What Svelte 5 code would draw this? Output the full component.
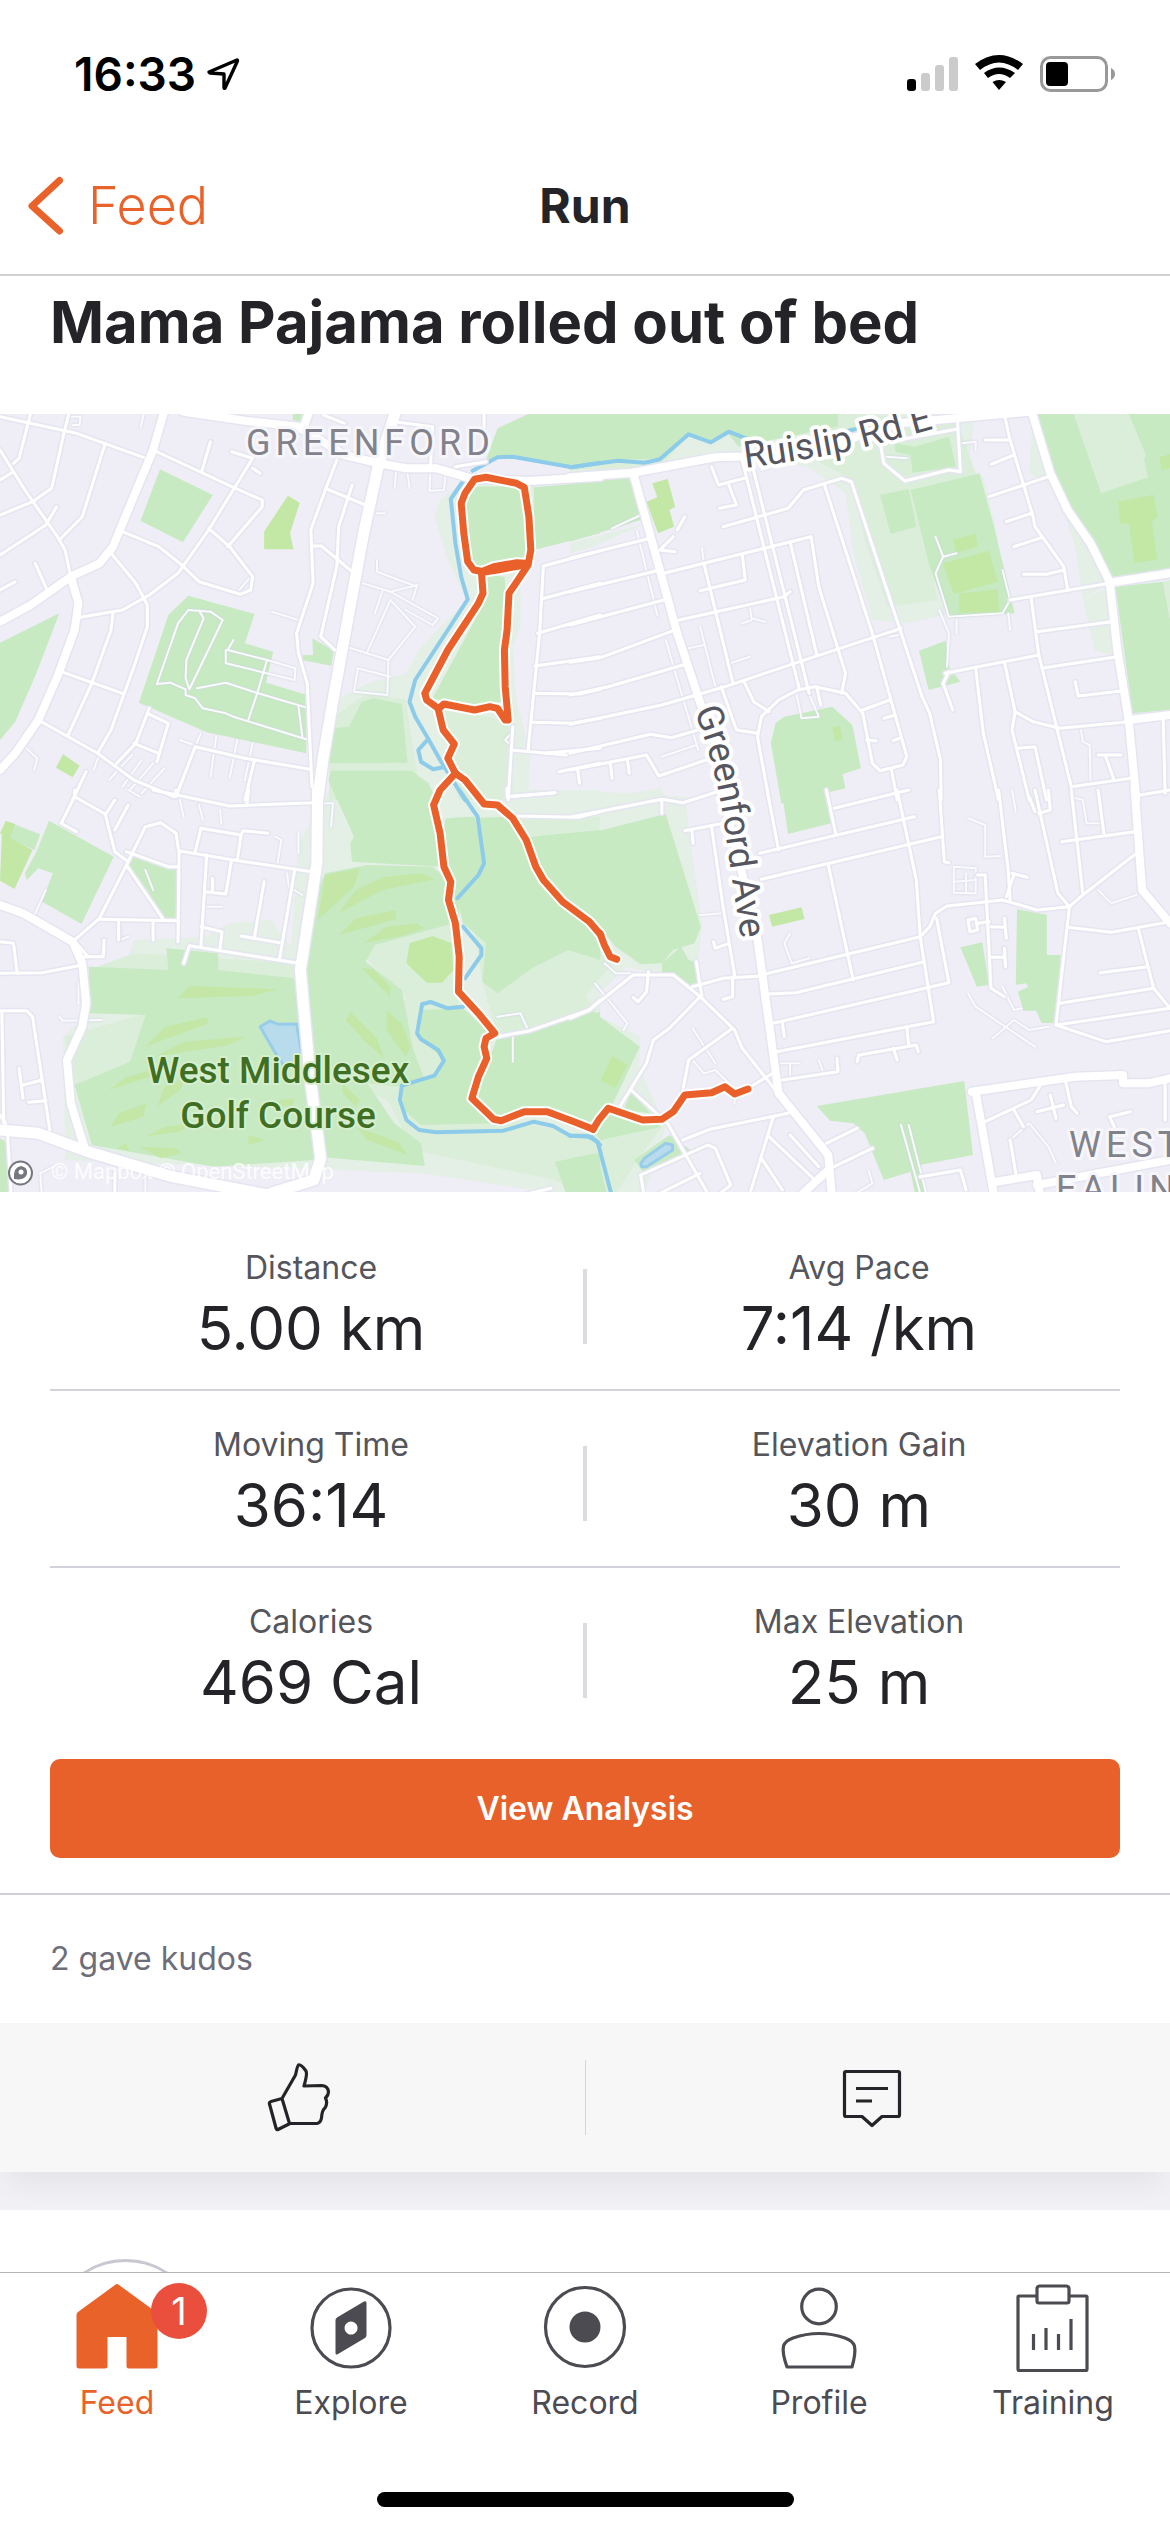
<script>
  const stats = [
    [
      { label: 'Distance', value: '5.00 km' },
      { label: 'Avg Pace', value: '7:14 /km' },
    ],
    [
      { label: 'Moving Time', value: '36:14' },
      { label: 'Elevation Gain', value: '30 m' },
    ],
    [
      { label: 'Calories', value: '469 Cal' },
      { label: 'Max Elevation', value: '25 m' },
    ],
  ];

  const tabs = ['Feed', 'Explore', 'Record', 'Profile', 'Training'];

  // Map geometry is stored per tile; each tile has its own origin and units.
  const tiles = {
    a: { x: 0, y: 400, sx: 2.613, sy: 3 },
    b: { x: 570, y: 400, sx: 2.613, sy: 3 },
    c: { x: 0, y: 790, sx: 2.613, sy: 3 },
    d: { x: 570, y: 790, sx: 2.613, sy: 3 },
  };

  function project(tile, line) {
    const t = tiles[tile];
    return line
      .split(' ')
      .map((p) => {
        const [x, y] = p.split(',').map(Number);
        return `${(t.x + x / t.sx).toFixed(1)},${(t.y + y / t.sy).toFixed(1)}`;
      })
      .join(' ');
  }

  const layer = (groups) =>
    Object.entries(groups).flatMap(([tile, lines]) => lines.map((l) => project(tile, l)));

  const haze = layer({
    a: [
      '1150,300 1230,230 1400,240 1400,480 1360,560 1360,680 1340,740 1350,900 1385,1060 1380,1200 860,1200 880,900 960,850 1060,820 1100,740 1220,600 1170,480 1135,350',
    ],
    b: ['0,120 300,80 700,40 860,40 1060,40 1040,200 1080,230 1120,420 1000,640 880,670 790,660 740,460 720,280 620,200 400,170 170,215 0,225', '0,430 200,370 60,440 0,460', '1210,40 1420,540 1340,600 1320,440 1270,260 1200,220', '1340,600 1410,560 1425,770 1370,750', '60,1200 240,1163 250,1200'],
    c: [
      '860,0 1568,0 1568,1230 1100,1150 170,1110 165,740 230,670 300,660 330,520 350,450 540,440 600,400 710,390 760,470 780,160',
    ],
    d: ['0,0 300,20 315,160 345,400 330,580 250,560 150,530 0,690 60,670 185,740 180,830 250,1010 190,1230 0,1230'],
  });

  const soft = layer({
    a: ['1150,930 1330,960 1340,1200 1200,1200 1170,1050', '860,960 960,880 1060,900 1100,1200 860,1200'],
    b: ['0,170 300,110 240,200 0,210', '700,40 1010,60 1060,220 900,270 960,600 830,620 770,420 740,240 640,180'],
    c: ['1190,80 1568,80 1520,600 1568,680 1300,740 1260,570', '940,420 1190,400 1200,700 1090,980 960,900 1060,620 960,510', '1000,900 1568,1050 1568,1230 1450,1170 1080,1080', '350,490 780,520 780,570 230,540', '170,740 380,670 330,860 190,890'],
    d: ['0,500 70,470 110,520 60,590 0,660', '0,1030 240,1010 170,1120 110,1230 0,1230'],
  });

  const parks = layer({
    a: [
      '418,208 556,285 478,427 367,362',
      '155,640 95,820 40,965 0,1020 0,728',
      '492,587 665,642 640,730 714,755 695,848 803,885 800,1060 540,997 363,908 440,645',
      '816,715 872,752 866,797 788,780 790,766 818,765',
      '1300,85 1385,40 1568,40 1568,190 1490,205 1340,165 1270,180',
      '1235,260 1360,258 1380,480 1255,505 1225,490 1212,340',
      '1395,262 1568,245 1568,400 1395,450',
      '1265,525 1318,530 1322,600 1310,905 1240,920 1130,895 1260,620',
      '975,895 1050,912 1065,1088 858,1090 870,985 912,980 945,905',
      '865,1112 1075,1112 1120,1150 1140,1200 880,1200 858,1140',
      '765,40 790,40 785,65 765,60',
    ],
    b: [
      '0,40 700,40 700,80 440,140 410,95 360,125 310,100 235,175 125,180 0,200',
      '0,245 158,235 185,360 0,425',
      '890,270 1070,220 1108,380 1162,640 990,655 940,500',
      '810,285 885,267 905,380 838,402',
      '850,130 900,140 990,110 1008,200 895,218 890,165 850,155',
      '1215,40 1568,40 1568,510 1410,540 1300,330',
      '1425,560 1550,545 1568,660 1568,930 1470,940',
      '912,752 982,722 990,800 1020,845 937,870',
      '560,950 685,920 738,975 760,1105 712,1123 720,1165 665,1180 670,1210 552,1210 525,1030 537,970',
    ],
    c: [
      '870,0 1120,-20 1150,230 920,215 915,160 925,140',
      '128,92 297,200 213,402 110,335 138,250 100,235 70,270 65,250 95,185',
      '35,102 105,133 90,180 25,145',
      '340,195 465,240 465,385 425,388 330,225',
      '232,530 440,540 435,475 570,490 570,540 770,565 800,780 820,1110 560,1130 240,1065 195,885 340,815 380,675 232,670',
      '850,250 960,225 1130,230 1170,270 1185,400 980,465 955,515 1050,600 1080,780 1110,870 1045,890 960,880 1030,1000 1100,1060 1110,1128 830,1100 780,540 830,300',
      '1165,85 1240,80 1265,220 1200,320 1200,400 1170,270 1150,160',
      '1325,80 1390,140 1568,120 1568,510 1485,480 1390,535 1300,610 1260,575 1270,460 1210,400 1195,330 1265,220 1250,85',
      '1105,660 1210,655 1280,730 1265,780 1235,930 1300,1000 1100,1005 1055,960 1050,890 1130,860 1160,810 1095,740',
      '1300,740 1400,720 1568,665 1568,1000 1420,950 1300,985 1240,930',
      '1450,1115 1568,1090 1568,1230 1485,1230',
      '0,1045 20,1060 30,1230 0,1230',
    ],
    d: [
      '0,145 250,72 342,412 325,460 270,480 240,520 185,523 120,470 90,430 0,350',
      '240,520 290,470 310,510 325,515 333,580 315,585 240,548',
      '0,685 60,665 182,770 110,945 60,1000 0,990',
      '160,905 210,970 140,960',
      '80,1050 60,1020 110,960 240,1010',
      '0,1105 70,1090 100,1230 0,1230',
      '260,1035 315,1080 190,1145 168,1110',
      '550,-20 665,-20 682,100 570,132',
      '1020,472 1077,457 1095,585 1063,590',
      '1168,358 1246,374 1246,495 1282,495 1270,700 1232,698 1218,662 1185,662 1170,605 1198,590 1190,580 1165,585',
      '645,948 1030,873 1053,1095 915,1125 930,1230 905,1230 890,1145 820,1170 770,1030 740,1000 680,992',
    ],
  });

  const meadow = layer({
    b: ['1315,40 1460,40 1505,165 1500,178 1510,232 1388,280', '1550,545 1568,540 1568,655'],
  });

  const lime = layer({
    a: ['752,287 783,308 758,400 767,448 690,448 690,395', '165,1063 208,1097 190,1132 146,1103'],
    b: ['215,250 255,237 275,320 260,330 272,380 230,400 200,305 228,292', '1000,420 1060,400 1065,440 1010,458', '975,490 1095,452 1118,545 1003,582', '1017,580 1117,568 1122,638 1017,638', '1432,305 1525,284 1535,350 1520,365 1535,478 1475,490 1460,372 1437,370', '685,982 705,977 712,1020 693,1024', '1540,172 1568,162 1568,205 1545,210'],
    c: ['5,130 85,180 38,297 0,272', '15,92 40,102 25,145 0,130', '1070,460 1130,438 1180,460 1185,540 1155,578 1115,578 1062,520'],
    d: ['520,375 605,352 613,387 528,410', '110,797 150,825 118,895 80,870 95,835'],
  });

  const fairways = layer({
    c: [
      '850,255 940,235 925,290 830,390',
      '885,370 930,300 1000,262 1100,250 1135,268 1000,300',
      '885,435 930,385 1035,360 1035,388',
      '950,460 1010,410 1090,400 1108,415 1060,435',
      '465,625 495,587 725,598 660,618',
      '380,770 430,710 540,682 545,700',
      '405,800 480,755 640,740 600,765',
      '285,900 330,860 430,830 420,850',
      '410,950 430,890 490,860 470,900',
      '290,1010 310,970 382,940 375,980',
      '945,535 975,538 1020,590 1020,620',
      '915,665 985,745 1003,805 950,750 903,690',
      '1010,662 1050,700 1073,770 1060,800 1010,720',
      '895,880 940,930 930,950 895,910',
      '930,1010 1040,1055 1065,1095 960,1050',
      '365,1070 460,1075 475,1090 420,1105',
      '650,1035 693,1050 648,1065',
      '305,1075 330,1060 338,1083',
      '700,935 770,925 765,945 710,955',
      '380,1040 430,1010 500,1000 470,1025',
    ],
  });

  const ponds = layer({
    c: ['680,710 705,693 728,703 775,702 790,800 770,830 740,825 715,780'],
    d: ['185,1120 195,1105 250,1060 268,1065 268,1080 200,1130 187,1130'],
  });

  const rivers = layer({
    a: ['1568,188 1495,202 1340,170 1300,172 1235,212', '1212,240 1178,297 1190,430 1205,530 1222,598 1170,690 1085,840 1070,905 1085,950 1118,1015 1150,1080 1215,1200', '1118,1018 1093,1050 1100,1085 1132,1108 1165,1100'],
    b: ['0,202 125,182 195,188 235,178 310,103 368,127 415,95 460,115', '715,95 745,88'],
    c: ['1200,0 1248,80 1265,220 1250,255 1195,325', '1210,410 1258,475 1258,495 1215,565', '1210,650 1170,655 1125,636 1103,643 1090,730 1100,748 1145,780 1160,812 1135,857 1050,887 1045,930 1062,990 1095,1020 1140,1027 1315,1022 1395,995 1445,1008 1490,1037 1545,1040 1568,1065'],
    d: ['0,1037 45,1038 72,1055 112,1230'],
  });

  const paths = layer({
    a: [
      '410,852 465,670 492,630 550,635 582,660 495,868 485,835 487,780 532,655 520,632',
      '410,852 445,848 485,868 485,885 510,895 530,925 590,940 610,950 800,1018',
      '515,865 590,848 670,878 798,922', '648,962 672,880 698,780', '610,720 595,750 698,780 772,805 770,840 590,790 590,750',
      '948,550 1020,575 1090,555 1078,600', '985,480 985,515 1090,560', '1020,600 960,755', '1020,575 1145,655 1130,675 1060,630',
      '1020,600 1085,680 1015,780 905,740', '1015,780 1012,885 925,875 935,805 1020,830', '1000,570 980,640',
      '60,1035 97,1075 90,1110', '260,1060 245,1110', '345,1065 285,1140', '370,1080 320,1160', '400,1090 340,1170', '430,1105 370,1180',
      '525,1000 510,1040', '565,1010 550,1130', '620,1020 600,1135', '660,1030 640,1140', '470,1020 520,1040', '1035,210 1032,260', '1065,220 1070,265', '1125,210 1122,272 1160,270 1165,220',
      '180,50 210,50 208,75 190,75', '375,45 368,80', '985,340 1005,340', '655,530 625,570', '710,635 780,660', '1335,1000 1320,1020 1335,1035', '780,920 790,1010',
    ],
    b: [
      '175,395 228,645', '345,445 350,490', '340,680 380,860', '250,720 335,1050', '310,745 350,735', '420,790 470,770', '470,620 475,660 450,670', '475,655 510,665',
      '955,410 975,470 955,520 990,650 1130,640 1150,600 1130,510', '975,470 1010,460', '965,630 990,700 985,800', '1010,660 1010,700', '1025,130 1060,125 1060,150', '1335,990 1340,1025 1358,1035 1360,1145',
      '240,1070 330,1035', '590,870 605,955 650,950 620,870', '835,710 860,705', '825,170 880,175', '110,385 185,345', '500,210 570,180', '1145,640 1150,690',
    ],
    c: ['720,140 735,150 725,220', '780,130 780,190', '845,40 870,40 865,110', '750,250 755,290 790,315', '380,240 400,300', '535,350 580,350', '1300,680 1360,670 1380,720', '155,680 165,692 265,690', '205,580 205,640', '1340,740 1340,815', '365,20 335,0', '470,30 480,80', '520,45 530,90', '575,60 578,100', '120,300 90,375', '310,395 315,450 335,440', '110,1230 105,1150 140,1130', '380,1170 380,1230'],
    d: [
      '90,520 120,550 165,550', '65,580 150,700 140,720', '320,715 380,820', '340,375 400,370', '575,430 560,460 580,520 625,505', '1040,85 1085,105 1085,200 1125,198', '1005,230 1060,235 1060,310 1003,308 1003,230', '1003,275 1060,270',
      '1040,610 1060,650 1215,770', '1105,745 1160,690 1200,720 1250,710', '1035,250 1035,310', '1130,590 1160,660 1180,655', '865,1005 920,1230', '885,1005 935,1230', '320,810 350,850 380,840 415,880', '545,820 600,820', '575,855 575,820', '660,840 650,810', '1380,300 1415,340 1480,315', '1310,20 1340,30 1350,100 1390,100', '1155,0 1165,65', '780,1140 790,1180 720,1230', '1150,1050 1200,1000 1250,1070 1270,1120', '430,920 430,940',
    ],
  });

  const streets = layer({
    a: [
      '0,50 200,100 375,172', '400,150 610,262 685,300 685,320 595,440', '180,40 165,110 135,265 85,305 0,345', '80,40 50,175 35,190', '0,150 65,270 150,410 170,450 185,530', '0,240 35,215', '0,465 120,375 148,320', '275,130 215,350 155,420',
      '550,125 527,215', '605,155 660,175 545,390 465,520 390,585 320,630 210,652', '660,205 680,220', '545,385 600,440 660,530 655,570 628,583 520,545 475,495 415,440 320,395', '290,460 355,550 385,615 385,680 350,800 290,990 255,1060', '295,640 290,690 240,850 178,1005', '160,815 320,880', '92,490 125,575', '0,570 40,545',
      '100,960 255,1060 350,1140 455,1190', '390,925 355,1030 305,1090', '385,940 440,970 410,1085', '350,1030 415,1060', '460,1190 510,1040 640,1075 810,1108', '665,1080 640,1200', '225,1115 190,1200',
      '880,180 850,270 812,390 818,550 775,700 780,760 803,850 815,1160', '850,265 955,315', '920,255 885,380 880,500 838,710 875,750', '818,438 840,438 920,515', '1030,65 1130,80 1125,200', '1190,200 1270,185', '1420,1060 1568,1045',
      '1568,452 1420,498 1410,700 1380,1050', '1415,597 1568,550', '1405,700 1568,645', '1398,798 1568,770', '1395,880 1515,882 1568,868', '1390,967 1495,970 1568,955', '1340,980 1328,1200', '1335,1050 1480,1065', '1460,1115 1568,1090', '1328,1190 1450,1178', '845,45 900,70', '1265,40 1265,80',
    ],
    b: [
      '450,180 600,870', '475,190 625,880', '370,200 388,255 455,235', '415,255 435,315 390,325', '400,380 570,325 610,270 710,235 735,245 920,890 940,940 968,1080 970,1200', '665,255 790,700 880,1070 870,1095 810,1112 790,1090 765,940 720,880 640,860 595,870 545,900 500,950 490,1010 520,1200',
      '0,475 210,415', '0,575 225,513', '0,675 245,600', '0,787 80,773 270,692', '0,885 100,860 295,795', '0,973 240,915 400,862 600,785 865,685', '0,1060 210,1003 265,1013 335,990', '0,1110 200,1065 232,1128 355,1080', '245,520 630,410 650,560 720,820 710,880', '575,425 645,765', '450,465 458,540 340,572', '350,490 425,845', '285,660 560,590 575,575', '270,410 235,450 275,455', '280,390 300,350', '395,860 435,990 490,1000', '455,845 480,905 520,935',
      '645,860 655,915', '765,930 835,900', '820,955 850,945', '775,1020 800,1022', '845,1022 860,1015', '840,1110 855,1200', '810,125 820,190 875,243 990,210 1020,215 1012,50', '810,130 1010,88', '1135,45 1150,120 1210,350 1215,380 1290,500 1300,565', '1085,120 1150,120', '1100,193 1160,165', '1095,290 1250,230', '1140,365 1205,340', '1160,440 1235,412', '1185,523 1245,523 1290,510', '1150,600 1410,550', '1205,595 1225,765 1310,1160', '1220,695 1415,665', '1240,803 1430,770', '980,820 1225,765', '1000,930 975,850 990,815', '1060,805 1080,1000 1120,1200', '1135,785 1163,935 1155,990 1200,1200', '1163,935 1210,965 1280,985 1460,965', '1320,845 1328,888 1440,873', '1310,1160 1465,1135', '1380,1065 1440,1065', '1400,1070 1420,1135', '1170,1045 1215,1040 1245,1200', '1550,960 1555,1180', '1490,1185 1568,1170', '20,1110 25,1150', '105,1090 110,1135', '150,1080 155,1120',
    ],
    c: [
      '400,0 600,48 820,38', '455,20 460,0', '645,45 650,0', '195,0 195,20 160,100 200,125', '195,20 275,72 300,185 335,215 260,385 200,445', '300,30 275,75', '335,45 300,120', '335,215 380,110 420,98 460,130 468,190 465,455', '330,185 440,230 465,230', '330,225 425,385', '260,388 465,392', '525,115 630,135 635,122 700,130', '525,115 510,185', '470,183 610,210 815,245', '630,135 620,210', '540,195 525,470', '605,210 590,312 535,305', '555,265 555,305', '690,275 665,440', '630,438 730,458', '770,240 730,510', '525,410 580,425 575,475', '480,520 495,467 780,520', '400,395 400,450', '310,395 310,450', '220,500 270,500 272,450', '200,460 230,500',
      '0,455 35,460 45,550', '0,550 110,548 215,525', '0,662 70,662 85,680 130,1020', '5,670 10,1000', '50,835 60,925', '60,885 110,870', '75,937 120,932', '0,975 15,1000', '20,1040 30,1230', '1300,740 1385,722 1540,660 1568,630', '1325,-5 1325,20 1450,8', '1355,78 1510,82 1568,65', '300,1150 300,1230', '1310,1230 1440,1195',
    ],
    d: [
      '0,82 240,28 295,38 400,0', '240,30 240,70', '300,122 400,100', '318,120 322,160', '370,110 400,350 430,555', '495,190 900,80', '500,268 970,140', '515,0 545,180', '670,0 695,135', '690,55 885,0', '855,0 905,270 915,440 950,695', '965,0 978,215 990,218', '675,225 740,570',
      '510,552 915,440 940,410 955,370 985,348 1090,335 1130,330 1220,360 1305,350', '520,612 590,608 920,517', '530,700 990,578 958,385', '540,785 950,695', '320,590 400,565 500,558', '345,620 330,515', '425,560 425,620 400,628', '375,455 380,475 415,460',
      '0,685 50,660 165,555 270,555 340,620 430,720 450,775 540,905', '205,545 200,605 178,635 165,622', '340,620 260,715 218,750 200,820 130,950', '425,715 310,810 295,900', '465,895 530,850', '160,900 255,1000 270,1030 370,1230', '295,1050 365,1018 570,970', '530,985 465,1230', '520,1040 640,1170', '575,1035 650,1130', '500,1105 555,1200', '185,1155 360,1065 380,1075 420,1185 370,1230', '185,1155 195,1230', '670,1060 750,1015', '690,1130 790,1075', '200,1230 340,1150',
      '555,870 700,845 698,805', '555,700 560,740', '750,815 755,795 905,765 910,785', '880,710 885,765', '845,775 855,810', '1120,0 1145,240 1150,330', '1155,250 1195,262', '1160,255 1140,320', '1215,0 1275,310 1305,350', '1225,70 1255,60 1250,0', '1200,20 1215,65', '1310,0 1340,310', '1380,0 1395,130', '1285,155 1475,125', '1305,350 1340,315 1480,190', '1305,350 1270,705', '1300,412 1415,427 1568,395', '1485,415 1525,595 1568,655', '1385,548 1510,530', '1280,640 1525,595', '1270,705 1568,655', '1270,705 1400,755 1568,722', '1085,255 1100,595 1135,620', '1040,390 1060,385 1065,420 1045,425 1040,390', '1065,400 1095,395', '1100,410 1135,412', '1135,385 1140,445', '1100,502 1135,502', '1135,475 1138,530', '1065,255 1085,255',
      '1085,995 1205,930 1230,885', '1160,960 1185,1010', '1220,965 1290,945', '1255,915 1270,985', '1295,875 1310,950 1325,970', '1410,980 1465,965', '1410,980 1430,1030', '1555,870 1555,990', '915,1160 1020,1140 1035,1200', '1150,1050 1165,1150',
    ],
  });

  const avenues = layer({
    a: ['430,30 400,150 295,440 260,490 185,530 80,615 0,665', '185,530 205,610 195,690 150,830 100,960 40,1060 0,1110', '810,30 790,90', '480,35 640,62 780,80 900,165 990,190 1060,205 1140,205 1230,235 1380,243 1568,230'],
    b: ['0,232 165,218 380,172 600,165 860,70 1200,35', '165,218 280,700 345,925 440,1200', '1205,30 1255,220 1300,330 1360,430 1410,545 1430,750 1460,960 1480,1200', '1410,548 1568,520', '1460,960 1568,945'],
    c: ['0,345 60,370 190,455 215,520 225,640 215,710 175,810 185,940 220,1070'],
    d: ['395,0 450,250 490,450 520,700 545,910 675,1095 685,1230', '675,1140 590,1230', '1475,-10 1495,300 1568,400', '1060,905 1110,1230', '1050,905 1320,860 1445,855 1445,880 1510,880 1568,865', '1115,1175 1220,1155 1230,1230', '1220,1185 1568,1110'],
  });

  const trunks = layer({
    a: ['1035,30 990,190 950,400 870,900 845,1070 830,1200'],
    c: ['830,0 828,220 785,540 810,860 838,1105 820,1170 710,1209', '0,1020 100,1030 230,1085 450,1160 700,1215'],
  });

  const route = layer({
    a: [
      '1258,514 1238,510 1222,485 1212,400 1205,310 1215,280 1240,238 1270,232 1350,250 1370,262 1382,350 1387,450 1380,495 1330,580 1325,690 1318,750 1320,860 1328,960 1320,960 1300,925 1280,920 1240,930 1160,912 1145,927 1158,990 1187,1032 1170,1075 1190,1120',
      '1375,490 1350,488 1290,500 1258,515 1262,580 1250,610 1170,750 1110,880 1115,900 1145,925',
      '1262,517 1300,510 1375,494',
    ],
    c: [
      '1190,-50 1150,0 1133,45 1150,130 1160,230 1178,275 1172,330 1190,400 1200,500 1198,605 1250,670 1293,730 1270,745 1265,770 1272,805 1250,860 1233,925 1290,988 1310,992 1370,965 1430,965 1500,995 1550,1018',
      '1190,-50 1215,-30 1265,42 1300,45 1340,85 1375,150 1400,230 1420,270 1470,335 1540,395 1570,435',
    ],
    d: ['60,1018 75,990 100,955 190,990 240,988 270,965 300,915 370,908 405,890 430,912 465,897', '78,430 90,465 105,500 122,508'],
  });
</script>

{#snippet lines(list, cls)}
  <g class={cls}>
    {#each list as points}<polyline {points} />{/each}
  </g>
{/snippet}

{#snippet areas(list, cls)}
  <g class={cls}>
    {#each list as points}<polygon {points} />{/each}
  </g>
{/snippet}

<div class="screen">
  <div class="status">
    <div class="clock">
      <span>16:33</span>
      <svg width="34" height="34" viewBox="0 0 34 34" aria-hidden="true">
        <path d="M3 15 L31 3 Q32 3 31 5 L19 31 Q18 32 18 30 L18 17 L4 16 Z" fill="none" stroke="#000" stroke-width="3.4" stroke-linejoin="round" />
      </svg>
    </div>
    <svg class="signals" width="210" height="38" viewBox="0 0 210 38" aria-hidden="true">
      <rect x="0" y="24" width="9" height="12" rx="3" />
      <g fill="#cbcbcb">
        <rect x="14" y="18" width="9" height="18" rx="3" />
        <rect x="28" y="10" width="9" height="26" rx="3" />
        <rect x="42" y="2" width="9" height="34" rx="3" />
      </g>
      <path d="M68 9 Q92 -9 116 9 L111 15 Q92 0 73 15 Z M77 18 Q92 7 108 18 L103 23 Q92 15 81 23 Z M85.500 27 Q92 23 99 27 L92 35 Z" />
      <rect x="134.500" y="2.500" width="65" height="33" rx="9" fill="none" stroke="#999" stroke-width="3" />
      <rect x="139" y="7" width="22" height="24" rx="4" />
      <path d="M204 13 Q208 15 208 19 Q208 23 204 25 Z" fill="#999" />
    </svg>
  </div>

  <header class="nav">
    <a class="back" href="#feed">
      <svg width="36" height="60" viewBox="0 0 36 60" aria-hidden="true">
        <path d="M31.500 4.500 L4 30 L31.500 55" fill="none" stroke="#e9622a" stroke-width="7" stroke-linecap="round" stroke-linejoin="round" />
      </svg>
      <span>Feed</span>
    </a>
    <h1>Run</h1>
  </header>

  <main>
    <h2>Mama Pajama rolled out of bed</h2>

    <svg class="map" viewBox="0 414 1170 778" role="img" aria-label="Map of the run around Greenford">
      <defs>
        <path id="ruislip" d="M745 468 Q800 461 850 451 Q890 441 940 427" />
        <path id="greenford-ave" d="M694 711 Q716 764 725 830 T746 970" />
      </defs>
      <rect y="414" width="1170" height="778" fill="#efeef6" />
      {@render areas(haze, 'haze')}
      {@render areas(soft, 'soft')}
      {@render areas(parks, 'park')}
      {@render areas(meadow, 'soft')}
      {@render areas(lime, 'lime')}
      {@render areas(fairways, 'fairway')}
      {@render areas(ponds, 'pond')}
      {@render lines(rivers, 'river')}
      {@render lines(paths, 'path')}
      {@render lines(streets, 'street edge')}
      {@render lines(avenues, 'avenue edge')}
      {@render lines(trunks, 'trunk edge')}
      {@render lines(streets, 'street')}
      {@render lines(avenues, 'avenue')}
      {@render lines(trunks, 'trunk')}

      <text class="place" x="246" y="455">GREENFORD</text>
      <text class="place" x="1069" y="1157">WEST</text>
      <text class="place" x="1056" y="1201">EALING</text>
      <text class="road"><textPath href="#ruislip">Ruislip Rd E</textPath></text>
      <text class="road"><textPath href="#greenford-ave">Greenford Ave</textPath></text>

      {@render lines(route, 'route edge')}
      {@render lines(route, 'route')}

      <text class="green" x="278" y="1083">West Middlesex</text>
      <text class="green" x="278" y="1128">Golf Course</text>

      <circle cx="20.500" cy="1173" r="11.500" fill="#fff" stroke="#77787f" stroke-width="2" />
      <path d="M14 1179 Q13 1167 21 1166 Q28 1167 27 1174 Q25 1181 14 1179 Z" fill="#77787f" />
      <circle cx="21" cy="1172" r="2.500" fill="#fff" />
      <text class="credit" x="51" y="1179">© Mapbox © OpenStreetMap</text>
    </svg>

    <dl class="stats">
      {#each stats as row}
        <div class="row">
          {#each row as stat}
            <div class="stat">
              <dt>{stat.label}</dt>
              <dd>{stat.value}</dd>
            </div>
          {/each}
        </div>
      {/each}
    </dl>

    <div class="action">
      <button class="analysis" type="button">View Analysis</button>
    </div>

    <p class="kudos">2 gave kudos</p>

    <div class="social">
      <button type="button" aria-label="Give kudos">
        <svg class="thumb" width="64" height="70" viewBox="0 0 64 70" aria-hidden="true">
          <path d="M2.500 41 Q2 39 4 38.500 L15 35.500 L28.500 12 Q30.500 2.500 31.500 2 Q34 1 39 8 Q40.500 11 37 23 L55 22.500 Q61 23 61.500 29 Q61.500 32 58.500 35 Q61 40 58 45 Q55 47 54.500 55 Q53.500 60 50 60.500 L23 60.500 L11 66.500 Q9.500 67 9 65 Z M15 35.500 L22.500 60.500" />
        </svg>
      </button>
      <button type="button" aria-label="Comments">
        <svg class="note" width="60" height="60" viewBox="0 0 60 60" aria-hidden="true">
          <path d="M4 3.500 H56 Q57.500 3.500 57.500 5 V47 Q57.500 48.500 56 48.500 H40 L30 57.500 L20 48.500 H4 Q2.500 48.500 2.500 47 V5 Q2.500 3.500 4 3.500 Z M14 20.500 H46 M14 33 H30" />
        </svg>
      </button>
    </div>

    <div class="gap"></div>

    <div class="next">
      <div class="avatar"></div>
    </div>
  </main>

  <nav class="tabs" aria-label="Main">
    {#each tabs as tab}
      <a href="#{tab.toLowerCase()}" class:active={tab === 'Feed'}>
        <svg width="90" height="92" viewBox="0 0 90 92" aria-hidden="true">
          {#if tab === 'Feed'}
            <path fill="#e9622a" d="M45 3 Q46 3 47 4 L84 31 Q85.500 32 85.500 34 V85 Q85.500 87.500 83 87.500 H57 Q54.500 87.500 54.500 85 V56 H35.500 V85 Q35.500 87.500 33 87.500 H7 Q4.500 87.500 4.500 85 V34 Q4.500 32 6 31 L43 4 Q44 3 45 3 Z" />
          {:else if tab === 'Explore'}
            <circle cx="45" cy="47" r="39" />
            <path class="solid" fill-rule="evenodd" d="M29.500 39 Q29.500 37.500 31 36.500 L58 20.500 Q60.500 19.500 60.500 22 V54 Q60.500 56 59 57 L32 73 Q29.500 74.500 29.500 72 Z M45 40.500 a6.500 6.500 0 1 0 .1 0 Z" />
          {:else if tab === 'Record'}
            <circle cx="45" cy="46" r="39.500" />
            <circle class="solid" cx="45" cy="46" r="15.500" />
          {:else if tab === 'Profile'}
            <circle cx="45" cy="25.500" r="17.300" />
            <path d="M13 86 Q8 72 9.500 65 Q11 60 19 57 Q45 48 71 57 Q79 60 80.500 65 Q82 72 78 86 Z" />
          {:else}
            <path d="M28 15 H11 Q10 15 10 16 V88 Q10 89.500 11 89.500 H78 Q79 89.500 79 88 V16 Q79 15 78 15 H62" />
            <path d="M32 5 H58 Q61 5 61 8 V20 Q61 22 59 22 H31 Q29 22 29 20 V8 Q29 5 32 5 Z M25.500 53 V69 M38 47 V69 M50.500 53 V69 M63 38 V69" />
          {/if}
        </svg>
        <span>{tab}</span>
        {#if tab === 'Feed'}<b class="badge">1</b>{/if}
      </a>
    {/each}
  </nav>
  <div class="home"><i></i></div>
</div>

<style>
  :global(body) {
    margin: 0;
    background: #fff;
  }

  .screen {
    display: flex;
    flex-direction: column;
    min-height: 100vh;
    overflow: hidden;
    background: #fff;
    color: #242428;
    font-family: Inter, 'Liberation Sans', sans-serif;
  }

  a {
    color: inherit;
    text-decoration: none;
  }

  button {
    border: 0;
    background: none;
    font: inherit;
    padding: 0;
    cursor: pointer;
  }

  .status {
    display: flex;
    justify-content: space-between;
    align-items: center;
    height: 148px;
    padding: 0 53px 0 74px;
    color: #000;
  }

  .clock {
    display: flex;
    align-items: center;
    gap: 10px;
    font-size: 46px;
    line-height: 56px;
    font-weight: 600;
  }

  .nav {
    display: grid;
    grid-template-columns: 1fr auto 1fr;
    align-items: center;
    height: 116px;
    padding: 0 28px 10px;
    border-bottom: 2px solid #d0d0d2;
  }

  .back {
    display: flex;
    align-items: center;
    gap: 24px;
    color: #e9622a;
    font-size: 52px;
    font-weight: 300;
    line-height: 64px;
  }

  h1 {
    margin: 0;
    font-size: 48px;
    line-height: 64px;
    font-weight: 700;
  }

  h2 {
    margin: 0;
    padding: 10px 50px 56px;
    font-size: 58px;
    line-height: 72px;
    font-weight: 700;
  }

  .map {
    display: block;
    width: 100%;
    height: auto;
    font-family: Roboto, 'Liberation Sans', sans-serif;
  }

  .map polyline {
    fill: none;
    stroke-linecap: round;
    stroke-linejoin: round;
  }

  .haze { fill: #e4efe6; }
  .soft { fill: #daeeda; }
  .park { fill: #c7eac2; }
  .lime { fill: #c3e8a5; }
  .fairway { fill: #c4e7a8; }
  .pond { fill: #b9dced; stroke: #97cdea; stroke-width: 3; stroke-linejoin: round; }
  .river { stroke: #8dcbea; stroke-width: 4; }
  .path { stroke: #fafaff; stroke-width: 2; filter: drop-shadow(0 0 1px #cfd2e2); }
  .street { stroke: #fff; stroke-width: 3; }
  .street.edge { stroke: #e4e5f0; stroke-width: 6; }
  .avenue { stroke: #fff; stroke-width: 8; }
  .avenue.edge { stroke: #e4e5f0; stroke-width: 11; }
  .trunk { stroke: #fff; stroke-width: 11; }
  .trunk.edge { stroke: #e4e5f0; stroke-width: 14; }
  .route { stroke: #e9602a; stroke-width: 7; }
  .route.edge { stroke: #fff; stroke-width: 11; }

  .map text {
    paint-order: stroke;
    stroke-linejoin: round;
  }

  .place {
    fill: #81828c;
    stroke: #f6f6fb;
    stroke-width: 6px;
    font-size: 36px;
    letter-spacing: 5px;
  }

  .road {
    fill: #55565f;
    stroke: #fff;
    stroke-width: 8px;
    font-size: 37px;
  }

  .green {
    fill: #3f6f22;
    stroke: #d5efcf;
    stroke-width: 4px;
    font-size: 37px;
    font-weight: 500;
    text-anchor: middle;
  }

  .credit {
    fill: #fff;
    fill-opacity: 0.85;
    font-size: 22px;
  }

  .stats {
    margin: 0 50px;
  }

  .row {
    display: grid;
    grid-template-columns: 1fr 1fr;
    column-gap: 26px;
    padding: 33px 0 22px;
    border-bottom: 2px solid #d2d2dc;
  }

  .row:first-child {
    padding-top: 55px;
  }

  .row:last-child {
    border-bottom: 0;
  }

  .stat {
    display: flex;
    flex-direction: column;
    align-items: center;
    position: relative;
  }

  .stat + .stat::before {
    content: '';
    position: absolute;
    left: -15px;
    top: 22px;
    width: 4px;
    height: 75px;
    background: #dcdce0;
  }

  dt {
    color: #55555c;
    font-size: 32px;
    line-height: 42px;
    font-weight: 400;
  }

  dd {
    margin: 0;
    font-size: 60px;
    line-height: 78px;
  }

  .action {
    padding: 16px 50px 35px;
    border-bottom: 2px solid #d0cfdb;
  }

  .analysis {
    display: block;
    width: 100%;
    height: 99px;
    border-radius: 10px;
    background: #e8602a;
    color: #fff;
    font-size: 32px;
    font-weight: 600;
  }

  .kudos {
    margin: 0;
    padding: 43px 50px;
    color: #6e6d7a;
    font-size: 32px;
    line-height: 42px;
  }

  .social {
    position: relative;
    display: grid;
    grid-template-columns: 1fr 1fr;
    height: 149px;
    padding: 0 12px;
    background: #f7f7f7;
    box-shadow: 0 20px 24px -8px rgba(0, 0, 0, 0.05);
    z-index: 1;
  }

  .social button {
    display: flex;
    align-items: center;
    justify-content: center;
  }

  .social button + button::before {
    content: '';
    position: absolute;
    left: 50%;
    top: 37px;
    width: 1px;
    height: 75px;
    background: #d6d6d8;
  }

  .social path {
    fill: none;
    stroke: #242428;
    stroke-width: 3.2;
    stroke-linejoin: round;
  }

  .gap {
    height: 38px;
    background: #f0f0f5;
  }

  .next {
    position: relative;
    height: 62px;
    overflow: hidden;
    background: #fff;
    z-index: 2;
    padding: 49px 50px 0;
    box-sizing: border-box;
  }

  .avatar {
    width: 145px;
    height: 145px;
    border: 3px solid #c9c8d0;
    border-radius: 50%;
  }

  .tabs {
    position: relative;
    z-index: 3;
    display: grid;
    grid-template-columns: repeat(5, 1fr);
    padding-top: 8px;
    border-top: 1px solid #b4b4b8;
    background: #fff;
    color: #4c4b52;
    font-size: 32px;
    line-height: 40px;
    margin-top: auto;
  }

  .tabs a {
    position: relative;
    display: flex;
    flex-direction: column;
    align-items: center;
    gap: 10px;
  }

  .tabs circle,
  .tabs path {
    fill: none;
    stroke: #4c4b52;
    stroke-width: 3.2;
    stroke-linejoin: round;
  }

  .tabs .solid {
    fill: #4c4b52;
    stroke: none;
  }

  .tabs .active path {
    fill: #e9622a;
    stroke: none;
  }

  .tabs .active {
    color: #e9622a;
  }

  .badge {
    position: absolute;
    left: 50%;
    top: 2px;
    margin-left: 34px;
    width: 56px;
    height: 56px;
    border-radius: 50%;
    background: #ea4f3d;
    color: #fff;
    font-size: 38px;
    line-height: 56px;
    font-weight: 400;
    text-align: center;
  }

  .home {
    display: flex;
    justify-content: center;
    padding: 69px 0 25px;
  }

  .home i {
    width: 417px;
    height: 15px;
    border-radius: 8px;
    background: #000;
  }
</style>
